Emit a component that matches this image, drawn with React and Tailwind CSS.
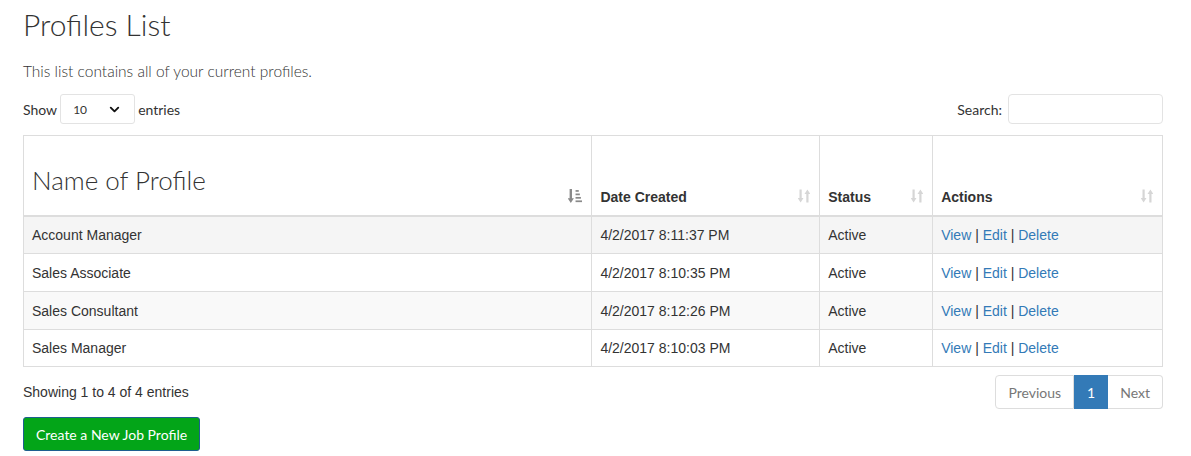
import { ChevronDown } from 'lucide-react';

const profiles = [
    { name: 'Account Manager', date: '4/2/2017 8:11:37 PM', status: 'Active', h: 'h-[38px]' },
    { name: 'Sales Associate', date: '4/2/2017 8:10:35 PM', status: 'Active', h: 'h-[38px]' },
    { name: 'Sales Consultant', date: '4/2/2017 8:12:26 PM', status: 'Active', h: 'h-[38px]' },
    { name: 'Sales Manager', date: '4/2/2017 8:10:03 PM', status: 'Active', h: 'h-[37px]' },
];

const rowBg = ['bg-[#f5f5f5]', 'bg-white', 'bg-[#f9f9f9]', 'bg-white'];

function SortIcon() {
    return (
        <svg width="12" height="14" viewBox="0 0 12 13" className="text-[#d6d6d6]" fill="currentColor">
            <path d="M1.5 0h2.2v8.5h1.8L2.6 13 -0.3 8.5h1.8z" />
            <path d="M8.3 13h2.2V4.5h1.8L9.4 0 6.5 4.5h1.8z" />
        </svg>
    );
}

function SortedIcon() {
    return (
        <svg width="14" height="14" viewBox="0 0 13 13" className="text-[#8a8a8a]" fill="currentColor">
            <path d="M1.5 0h2.2v8.5h1.8L2.6 13 -0.3 8.5h1.8z" />
            <rect x="7" y="1" width="3" height="1.6" />
            <rect x="7" y="4.2" width="4" height="1.6" />
            <rect x="7" y="7.4" width="5" height="1.6" />
            <rect x="7" y="10.6" width="6" height="1.6" />
        </svg>
    );
}

function HeaderCell({ children, sorted, className = '' }) {
    return (
        <th className={`border border-[#ddd] border-b-2 px-2 pb-2 align-bottom text-left ${className}`}>
            <div className="flex items-end justify-between">
                {children}
                <span className="mb-[4px] mr-[1px]">{sorted ? <SortedIcon /> : <SortIcon />}</span>
            </div>
        </th>
    );
}

export default function App() {
    const lato = { fontFamily: 'Lato, "Open Sans", sans-serif' };
    const arial = { fontFamily: '"Liberation Sans", Arial, sans-serif' };
    return (
        <div className="min-h-screen bg-white px-[23px] text-[#333]" style={lato}>
            <div className="w-[1140px]">
                {/* Title */}
                <h1 className="pt-[8px] text-[30px] font-light leading-[33px] text-[#333]">Profiles List</h1>
                <p className="mt-[20px] text-[15.5px] font-light leading-[20px]">This list contains all of your current profiles.</p>

                {/* Controls */}
                <div className="mt-[13px] flex h-[30px] items-center justify-between text-[14px]">
                    <div className="flex items-center">
                        <span>Show</span>
                        <div className="mx-[3px] flex h-[30px] w-[75px] items-center justify-between rounded-[3px] border border-[#e3e3e3] pl-[12px] pr-[12px]">
                            <span className="mt-[2px] text-[12px]">10</span>
                            <ChevronDown size={15} strokeWidth={3} className="text-[#111]" />
                        </div>
                        <span>entries</span>
                    </div>
                    <div className="flex items-center">
                        <span className="mr-[6px]">Search:</span>
                        <div className="h-[30px] w-[155px] rounded-[4px] border border-[#e3e3e3]" />
                    </div>
                </div>

                {/* Table */}
                <table className="mt-[11px] w-full border-collapse text-[14px]" style={arial}>
                    <colgroup>
                        <col className="w-[569px]" />
                        <col className="w-[228px]" />
                        <col className="w-[113px]" />
                        <col className="w-[230px]" />
                    </colgroup>
                    <thead>
                        <tr className="h-[80px]">
                            <HeaderCell sorted>
                                <h3 className="mb-[12px] text-[26px] font-light leading-[29px] text-[#333]" style={lato}>Name of Profile</h3>
                            </HeaderCell>
                            <HeaderCell><span className="font-bold leading-[20px]">Date Created</span></HeaderCell>
                            <HeaderCell><span className="font-bold leading-[20px]">Status</span></HeaderCell>
                            <HeaderCell><span className="font-bold leading-[20px]">Actions</span></HeaderCell>
                        </tr>
                    </thead>
                    <tbody>
                        {profiles.map((p, i) => (
                            <tr key={p.name} className={`${rowBg[i]} ${p.h}`}>
                                <td className="border border-[#ddd] px-2 leading-[20px]">{p.name}</td>
                                <td className="border border-[#ddd] px-2 leading-[20px]">{p.date}</td>
                                <td className="border border-[#ddd] px-2 leading-[20px]">{p.status}</td>
                                <td className="border border-[#ddd] px-2 leading-[20px]">
                                    <a className="text-[#337ab7]">View</a> | <a className="text-[#337ab7]">Edit</a> | <a className="text-[#337ab7]">Delete</a>
                                </td>
                            </tr>
                        ))}
                    </tbody>
                </table>

                {/* Footer */}
                <div className="mt-[8px] flex items-center justify-between">
                    <span className="text-[14px]" style={arial}>Showing 1 to 4 of 4 entries</span>
                    <div className="flex h-[34px] text-[14px]">
                        <span className="flex items-center rounded-l-[4px] border border-[#ddd] px-[12px] text-[#777]">Previous</span>
                        <span className="flex items-center border border-[#337ab7] bg-[#337ab7] px-[12px] text-white">1</span>
                        <span className="flex items-center rounded-r-[4px] border border-l-0 border-[#ddd] px-[12px] text-[#777]">Next</span>
                    </div>
                </div>

                <button className="mt-[8px] flex h-[34px] items-center rounded-[3px] border border-[#1d5f8f] bg-[#03a518] px-[12px] text-[14px] text-white">
                    Create a New Job Profile
                </button>
            </div>
        </div>
    );
}
